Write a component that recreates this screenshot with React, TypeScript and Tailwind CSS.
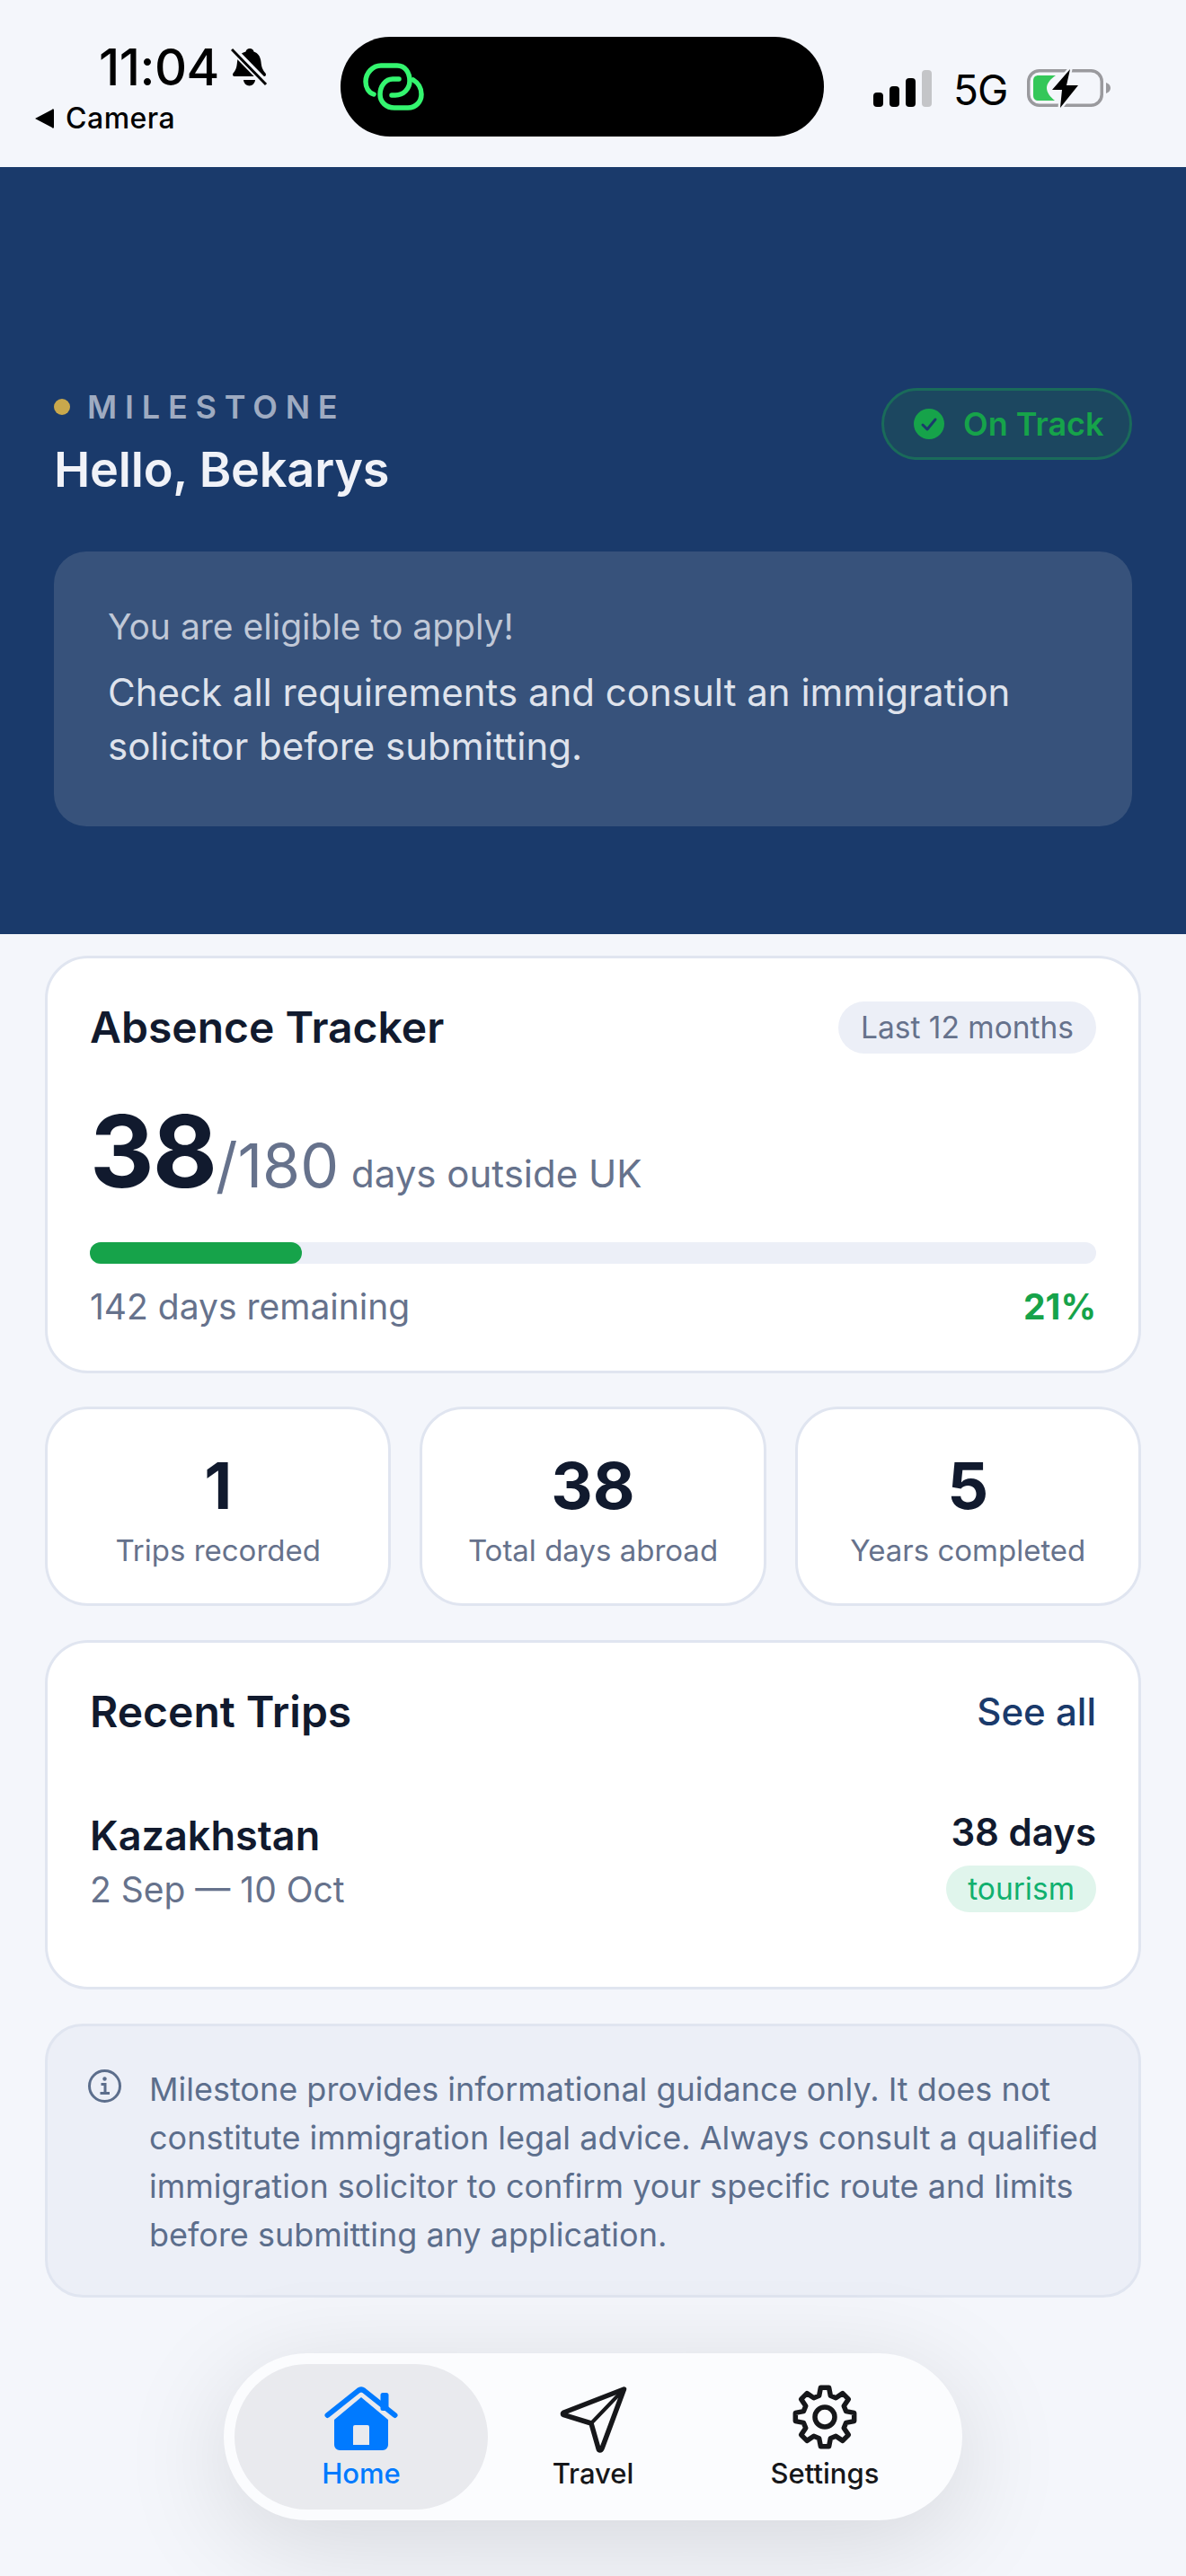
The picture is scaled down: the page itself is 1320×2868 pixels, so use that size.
const font = "font-['Inter',sans-serif]";

// 8 tooth gear outline, drawn around the centre of a 72 box
const gearPath = Array.from({ length: 8 }, (_, i) => {
  const pt = (deg: number, r: number) => {
    const a = ((i * 45 - 90 + deg) * Math.PI) / 180;
    return `${(36 + r * Math.cos(a)).toFixed(2)} ${(36 + r * Math.sin(a)).toFixed(2)}`;
  };
  return `${i === 0 ? 'M' : 'L'}${pt(-15, 24.500)} L${pt(-8, 33)} L${pt(8, 33)} L${pt(15, 24.500)}`;
}).join(' ') + ' Z';

function StatusBar() {
  return (
    <div className="flex h-[186px] items-start bg-[#f4f6fb] text-black">
      <div className="flex w-[379px] flex-col pl-[38px] pt-[45px]">
        <div className="flex items-center pl-[72px]">
          <span className="text-[56px] leading-[60px] font-medium tracking-[-0.5px]">11:04</span>
          <svg className="ml-[13px] h-[44px] w-[41px]" viewBox="0 0 41 44">
            <path d="M21 1c2.500 0 4 1.500 4.500 3.500C30 6 33 10 33.500 16c.5 6 2 9 5 12.500 1 1.500.5 3.500-1.500 3.500H4c-2 0-2.500-2-1.500-3.500 3-3.500 4-6.500 4.500-12.500C7.500 10 11 6 16.500 4.500 17 2.500 18.500 1 21 1z" fill="#000" />
            <path d="M14 36h13a6.500 6.500 0 0 1-13 0z" fill="#000" />
            <path d="M2 2 40 41" stroke="#f4f6fb" strokeWidth="8" />
            <path d="M1 2 39 41" stroke="#000" strokeWidth="3" />
          </svg>
        </div>
        <div className="mt-[8px] flex items-center">
          <svg className="h-[22px] w-[22px]" viewBox="0 0 22 22">
            <path d="M1 11 20 1a1 1 0 0 1 2 1v18a1 1 0 0 1-2 1z" fill="#000" />
          </svg>
          <span className="ml-[13px] text-[32px] leading-[38px] font-medium tracking-[0.5px]">Camera</span>
        </div>
      </div>
      <div className="mt-[41px] flex h-[111px] w-[538px] items-center rounded-[55px] bg-black pl-[25px]">
        <svg className="h-[53px] w-[68px]" viewBox="0 0 68 53" fill="none" stroke="#34f56f" strokeWidth="5.500" strokeLinecap="round">
          <path d="M12 35C6 33 3 27 3 21 3 11 11 3 20 3h18c9 0 14 8 14 17 0 9-7 16-16 16h-4" />
          <path d="M40 18h-7c-8 0-14 8-14 17 0 9 7 15 16 15h15c9 0 15-7 15-15 0-7-4-13-9-16" />
        </svg>
      </div>
      <div className="ml-[55px] flex items-end pt-[76px]">
        <svg className="h-[41px] w-[65px]" viewBox="0 0 65 41">
          <rect x="0" y="25" width="11" height="16" rx="4" fill="#000" />
          <rect x="18" y="18" width="11" height="23" rx="4" fill="#000" />
          <rect x="36" y="9" width="11" height="32" rx="4" fill="#000" />
          <rect x="54" y="0" width="11" height="41" rx="4" fill="#c4c5c8" />
        </svg>
        <span className="mb-[-3px] ml-[24px] text-[46px] leading-[44px] tracking-[-1px]">5G</span>
        <svg className="mb-[-1px] ml-[22px] h-[44px] w-[93px]" viewBox="0 0 93 44">
          <rect x="1.750" y="2.750" width="81.500" height="38.500" rx="12" fill="none" stroke="#9a9a9e" strokeWidth="3.500" />
          <path d="M88 16c3 1 5 3 5 6s-2 5-5 6z" fill="#9a9a9e" />
          <path d="M13 8h19c-6 4-10 9-10 14s4 10 9 14H13c-4 0-6-2-6-6V14c0-4 2-6 6-6z" fill="#34c759" />
          <path d="M48 1 28 24h11l-2 20 20-25H44z" fill="#000" stroke="#f4f6fb" strokeWidth="5" paintOrder="stroke" strokeLinejoin="round" />
        </svg>
      </div>
    </div>
  );
}

function Header() {
  return (
    <div className="h-[854px] bg-[#1a3a6b] px-[60px] pt-[246px]">
      <div className="flex items-start justify-between">
        <div>
          <div className="flex items-center">
            <span className="h-[18px] w-[18px] rounded-full bg-[#c9a84c]" />
            <span className="ml-[19px] text-[36px] leading-[42px] font-semibold tracking-[8.800px] text-[#9fabc1]">MILESTONE</span>
          </div>
          <div className="mt-[16px] text-[54px] leading-[66px] font-semibold tracking-[-0.2px] text-[#f0f2f8]">Hello, Bekarys</div>
        </div>
        <div className="flex h-[80px] w-[279px] items-center rounded-full border-[3px] border-[#1a6b5a] bg-[#1c4760] pl-[33px]">
          <svg className="h-[34px] w-[34px]" viewBox="0 0 34 34">
            <circle cx="17" cy="17" r="17" fill="#16a34a" />
            <path d="M10 18l5 5 9-11" fill="none" stroke="#1a3a6b" strokeWidth="3" strokeLinecap="round" strokeLinejoin="round" />
          </svg>
          <span className="ml-[21px] text-[36px] leading-[44px] font-semibold text-[#16a34a]">On Track</span>
        </div>
      </div>
      <div className="mt-[58px] h-[306px] rounded-[36px] bg-[#37527b] px-[60px] pt-[59px]">
        <div className="text-[39px] leading-[50px] text-[#c0c8d7]">You are eligible to apply!</div>
        <div className="mt-[18px] text-[42px] leading-[60px] text-[#dfe3ec]">
          Check all requirements and consult an immigration solicitor before submitting.
        </div>
      </div>
    </div>
  );
}

function AbsenceCard() {
  return (
    <div className="h-[465px] rounded-[48px] border-[3px] border-[#e0e5f0] bg-white px-[47px] pt-[48px]">
      <div className="flex items-center justify-between">
        <span className="text-[48px] leading-[58px] font-semibold text-[#111a2e]">Absence Tracker</span>
        <span className="flex h-[58px] items-center rounded-full bg-[#eceff7] px-[25px] text-[33.500px] text-[#66728c]">Last 12 months</span>
      </div>
      <div className="mt-[40px] flex items-baseline">
        <span className="text-[111px] leading-[138px] font-bold tracking-[-2px] text-[#111a2e]">38</span>
        <span className="text-[68px] leading-[80px] text-[#66728c]">/180</span>
        <span className="ml-[14px] text-[42px] text-[#66728c]">days outside UK</span>
      </div>
      <div className="mt-[32px] h-[24px] rounded-full bg-[#eceff7]">
        <div className="h-full w-[236px] rounded-full bg-[#16a34a]" />
      </div>
      <div className="mt-[23px] flex items-center justify-between">
        <span className="text-[39px] leading-[50px] text-[#66728c]">142 days remaining</span>
        <span className="text-[39px] leading-[50px] font-bold text-[#16a34a]">21%</span>
      </div>
    </div>
  );
}

const stats = [
  { value: '1', label: 'Trips recorded' },
  { value: '38', label: 'Total days abroad' },
  { value: '5', label: 'Years completed' },
];

function StatCards() {
  return (
    <div className="mt-[37px] grid grid-cols-3 gap-[32px]">
      {stats.map((stat) => (
        <div key={stat.label} className="flex h-[222px] flex-col items-center rounded-[48px] border-[3px] border-[#e0e5f0] bg-white pt-[43px]">
          <span className="text-[72px] leading-[84px] font-bold text-[#111a2e]">{stat.value}</span>
          <span className="mt-[8px] text-[33px] leading-[44px] text-[#66728c]">{stat.label}</span>
        </div>
      ))}
    </div>
  );
}

function RecentTrips() {
  return (
    <div className="mt-[38px] h-[389px] rounded-[48px] border-[3px] border-[#e0e5f0] bg-white px-[47px] pt-[48px]">
      <div className="flex items-center justify-between">
        <span className="text-[48px] leading-[58px] font-semibold text-[#111a2e]">Recent Trips</span>
        <span className="text-[42px] leading-[58px] font-medium text-[#1a3a6b]">See all</span>
      </div>
      <div className="mt-[79px] flex items-start justify-between">
        <div>
          <div className="text-[45px] leading-[60px] font-semibold text-[#111a2e]">Kazakhstan</div>
          <div className="mt-[5px] text-[39px] leading-[50px] text-[#66728c]">2 Sep — 10 Oct</div>
        </div>
        <div className="flex flex-col items-end">
          <div className="text-[42px] leading-[52px] font-semibold text-[#111a2e]">38 days</div>
          <div className="mt-[11px] flex h-[52px] items-center rounded-full bg-[#e0f5ec] px-[24px] text-[33.500px] text-[#10b06f]">tourism</div>
        </div>
      </div>
    </div>
  );
}

function Disclaimer() {
  return (
    <div className="mt-[38px] flex h-[305px] rounded-[42px] border-[3px] border-[#e0e5f0] bg-[#eceff7] pl-[45px] pt-[43px]">
      <svg className="mt-[5px] h-[37px] w-[37px] shrink-0" viewBox="0 0 37 37" fill="none" stroke="#5c6e8c" strokeWidth="3">
        <circle cx="18.500" cy="18.500" r="17" />
        <circle cx="18.500" cy="10.500" r="2.200" fill="#5c6e8c" stroke="none" />
        <path d="M14.500 16.500h4.500v10M13.500 26.500h10.500" />
      </svg>
      <p className="ml-[31px] w-[1060px] text-[36px] leading-[54px] text-[#5c6e8c]">
        Milestone provides informational guidance only. It does not constitute immigration legal advice. Always consult a qualified immigration solicitor to confirm your specific route and limits before submitting any application.
      </p>
    </div>
  );
}

function BottomNav() {
  return (
    <div className="mx-auto mt-[62px] flex h-[186px] w-[822px] items-center rounded-[93px] bg-[#fbfcfe] px-[12px] shadow-[0_24px_120px_rgba(0,0,0,0.13)]">
      <div className="flex h-[162px] w-[282px] flex-col items-center rounded-[81px] bg-[#e9eaee] pt-[25px]">
        <svg className="h-[72px] w-[82px]" viewBox="0 0 82 72" fill="#007aff">
          <path fillRule="evenodd" d="M11 37 41 12l30 25v28a6 6 0 0 1-6 6H17a6 6 0 0 1-6-6z M34 43h14a2 2 0 0 1 2 2v20H32V45a2 2 0 0 1 2-2z" />
          <rect x="62.500" y="7" width="9" height="20" rx="2.500" />
          <path d="M3.500 32 38 4.500a5 5 0 0 1 6 0L78.500 32" fill="none" stroke="#007aff" strokeWidth="6" strokeLinecap="round" strokeLinejoin="round" />
        </svg>
        <span className="mt-[7px] text-[31px] leading-[36px] font-medium text-[#007aff]">Home</span>
      </div>
      <div className="flex h-[162px] w-[234px] flex-col items-center pt-[24px] text-[#16171a]">
        <svg className="h-[76px] w-[77px]" viewBox="0 0 77 76" fill="none" stroke="#16171a" strokeWidth="5.500" strokeLinejoin="round" strokeLinecap="round">
          <path d="M72.500 4 5.500 30c-1.500.8-1.500 2 0 2.600L36 42l8 28c.6 2.500 3 2.500 4 0z" />
          <path d="M72.500 4 36 42" strokeWidth="4" />
        </svg>
        <span className="mt-[4px] text-[31px] leading-[36px] font-medium">Travel</span>
      </div>
      <div className="flex h-[162px] w-[282px] flex-col items-center pt-[23px] text-[#16171a]">
        <svg className="h-[72px] w-[72px]" viewBox="0 0 72 72" fill="none" stroke="#16171a" strokeWidth="5.500" strokeLinejoin="round">
          <path d={gearPath} />
          <circle cx="36" cy="36" r="11" />
        </svg>
        <span className="mt-[9px] text-[31px] leading-[36px] font-medium">Settings</span>
      </div>
    </div>
  );
}

export default function App() {
  return (
    <div className={`h-[2868px] overflow-hidden bg-[#f4f6fb] ${font}`}>
      <StatusBar />
      <Header />
      <div className="px-[50px] pt-[24px]">
        <AbsenceCard />
        <StatCards />
        <RecentTrips />
        <Disclaimer />
        <BottomNav />
      </div>
    </div>
  );
}
